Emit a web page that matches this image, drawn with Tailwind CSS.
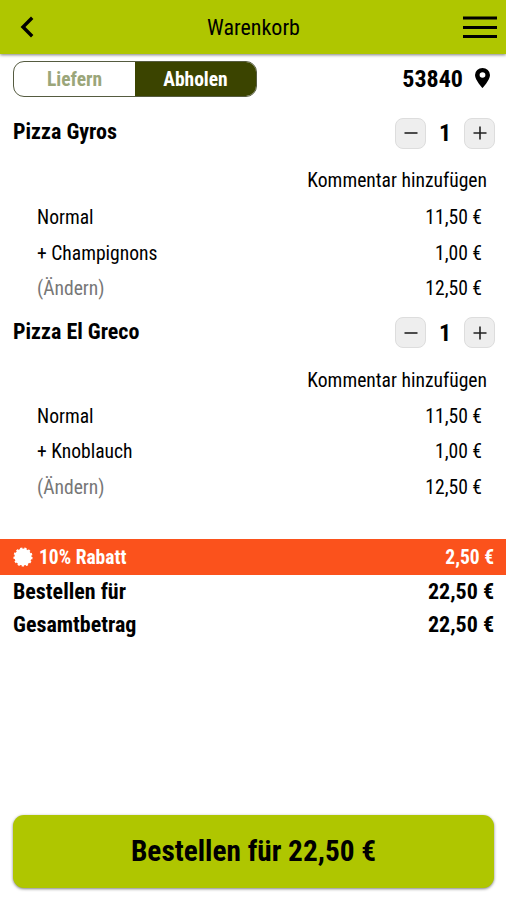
<!DOCTYPE html>
<html lang="de">
<head>
    <meta charset="UTF-8">
    <meta name="viewport" content="width=device-width, initial-scale=1.0">
    <title>Warenkorb</title>
    <script src="https://cdn.jsdelivr.net/npm/@tailwindcss/browser@4"></script>
</head>
<body class="min-h-screen flex flex-col bg-white text-black font-['Roboto_Condensed','Roboto',sans-serif] font-stretch-75% text-[19.6px]">
    <!-- Header -->
    <header class="h-[54px] bg-[#afc600] shadow-[0_1px_3px_rgba(0,0,0,0.5)] flex items-center justify-between pl-5 pr-[9px]">
        <button class="w-[24px]" aria-label="Zurück">
            <svg class="w-[14px] h-[22px]" viewBox="0 0 14 22" fill="none" stroke="black" stroke-width="3.4"><path d="M12.2 1.8 3 11l9.200 9.200"/></svg>
        </button>
        <h1 class="text-[22px]">Warenkorb</h1>
        <button aria-label="Menü">
            <svg class="w-[34px] h-[24px]" viewBox="0 0 34 24" stroke="black" stroke-width="3"><path d="M0 3h34M0 12.500h34M0 21.500h34"/></svg>
        </button>
    </header>

    <main class="flex flex-col">
        <!-- Delivery toggle -->
        <section class="flex items-center justify-between pt-[7px] pl-[13px] pr-4">
            <div class="flex w-[244px] h-[36px] rounded-[11px] border border-[#555b40] overflow-hidden font-bold text-[19.500px]">
                <button class="flex-1 pt-[2px] text-[#9ba67a]">Liefern</button>
                <button class="flex-1 pt-[2px] bg-[#3b4400] text-white">Abholen</button>
            </div>
            <div class="flex items-center gap-[12px] font-bold text-[24px]">
                <span class="-mt-px">53840</span>
                <svg class="w-[15px] h-[20px] -mt-[2px]" viewBox="0 0 14 20" preserveAspectRatio="none"><path fill-rule="evenodd" d="M7 0a7 7 0 0 1 7 7c0 5-7 13-7 13S0 12 0 7a7 7 0 0 1 7-7zm0 4.300a2.700 2.700 0 1 0 0 5.400 2.700 2.700 0 0 0 0-5.400z"/></svg>
            </div>
        </section>

        <!-- Items -->
        <section class="h-[199.500px] mt-[18px] pl-[13px] pr-[11px]">
            <div class="flex items-center justify-between h-[36px]">
                <h2 class="font-bold text-[22px] -mt-[3px]">Pizza Gyros</h2>
                <div class="flex items-center">
                    <button class="w-[31px] h-[31px] rounded-[8px] bg-[#eee] border border-[#ddd] flex items-center justify-center" aria-label="Weniger">
                        <svg class="w-[14px] h-[14px]" viewBox="0 0 14 14" stroke="#222" stroke-width="1.600"><path d="M.5 7h13"/></svg>
                    </button>
                    <span class="w-[38px] text-center font-bold text-[24px]">1</span>
                    <button class="w-[31px] h-[31px] rounded-[8px] bg-[#eee] border border-[#ddd] flex items-center justify-center" aria-label="Mehr">
                        <svg class="w-[14px] h-[14px]" viewBox="0 0 14 14" stroke="#222" stroke-width="1.600"><path d="M.5 7h13M7 .5v13"/></svg>
                    </button>
                </div>
            </div>
            <p class="h-[36px] mt-[12px] pr-2 leading-[36px] text-right">Kommentar hinzufügen</p>
            <div class="pt-px pl-[24px] pr-[13px] leading-[35.500px]">
                <div class="flex justify-between"><span>Normal</span><span>11,50 €</span></div>
                <div class="flex justify-between"><span>+ Champignons</span><span>1,00 €</span></div>
                <div class="flex justify-between"><span class="text-[#777]">(Ändern)</span><span>12,50 €</span></div>
            </div>
        </section>
        <section class="h-[199.500px] pl-[13px] pr-[11px]">
            <div class="flex items-center justify-between h-[36px]">
                <h2 class="font-bold text-[22px] -mt-[3px]">Pizza El Greco</h2>
                <div class="flex items-center">
                    <button class="w-[31px] h-[31px] rounded-[8px] bg-[#eee] border border-[#ddd] flex items-center justify-center" aria-label="Weniger">
                        <svg class="w-[14px] h-[14px]" viewBox="0 0 14 14" stroke="#222" stroke-width="1.600"><path d="M.5 7h13"/></svg>
                    </button>
                    <span class="w-[38px] text-center font-bold text-[24px]">1</span>
                    <button class="w-[31px] h-[31px] rounded-[8px] bg-[#eee] border border-[#ddd] flex items-center justify-center" aria-label="Mehr">
                        <svg class="w-[14px] h-[14px]" viewBox="0 0 14 14" stroke="#222" stroke-width="1.600"><path d="M.5 7h13M7 .5v13"/></svg>
                    </button>
                </div>
            </div>
            <p class="h-[36px] mt-[12px] pr-2 leading-[36px] text-right">Kommentar hinzufügen</p>
            <div class="pl-[24px] pr-[13px] leading-[35.500px]">
                <div class="flex justify-between"><span>Normal</span><span>11,50 €</span></div>
                <div class="flex justify-between"><span>+ Knoblauch</span><span>1,00 €</span></div>
                <div class="flex justify-between"><span class="text-[#777]">(Ändern)</span><span>12,50 €</span></div>
            </div>
        </section>

        <!-- Totals -->
        <section class="mt-[25px] font-bold text-[22px]">
            <div class="flex items-center h-[36px] pt-px pl-[13px] pr-3 bg-[#fb521c] text-white text-[19.500px]">
                <svg class="w-5 h-5 mr-[6px] -mt-[2px]" viewBox="-10 -10 20 20" fill="white" stroke="white" stroke-width="2" stroke-dasharray="2.200 1.940"><circle r="7.900" stroke="none"/><circle r="8.570"/></svg>
                <span>10% Rabatt</span>
                <span class="ml-auto">2,50 €</span>
            </div>
            <div class="flex justify-between h-[33px] leading-[33px] pl-[13px] pr-3"><span>Bestellen für</span><span>22,50 €</span></div>
            <div class="flex justify-between h-[33px] leading-[33px] pl-[13px] pr-3"><span>Gesamtbetrag</span><span>22,50 €</span></div>
        </section>
    </main>

    <!-- Order button -->
    <footer class="mt-auto pl-[13px] pr-3 pb-[12px]">
        <button class="w-full h-[73px] rounded-[11px] bg-[#afc600] shadow-[0_1px_3px_rgba(0,0,0,0.5)] font-bold text-[29.300px]">Bestellen für 22,50 €</button>
    </footer>
</body>
</html>
